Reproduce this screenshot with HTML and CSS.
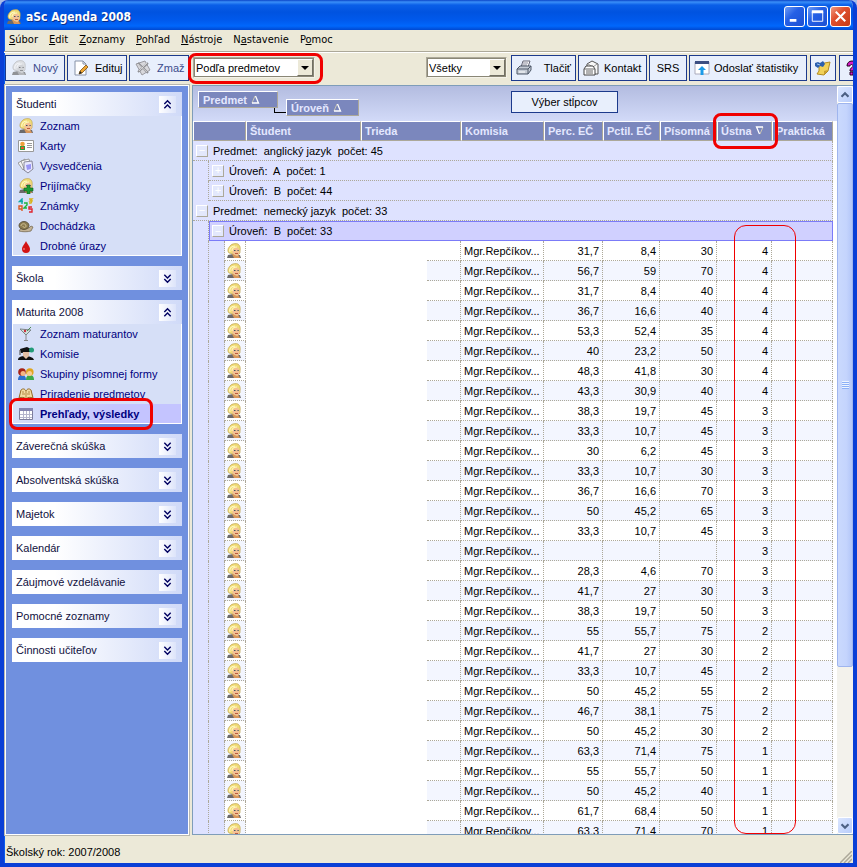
FILE: index.html
```html
<!DOCTYPE html>
<html lang="sk">

<head>
  <meta charset="UTF-8">
  <meta name="viewport" content="width=device-width, initial-scale=1.0">
  <title>aSc Agenda 2008</title>
  <link rel="stylesheet" href="styles.css">
</head>

<body>
  <svg class="sprite" aria-hidden="true">
    <symbol id="face" viewBox="0 0 16 16">
      <path d="M1 15l1-3 5-1 7 1 1 3z" fill="#6c6a6c"/>
      <path d="M6 11l6 0 2 4H8z" fill="#d9965c"/>
      <path d="M3 10C1 8 2 5 4 3c2-3 8-3 9-1 2 2 1 5 1 8l-3 3-4-2z" fill="#f0dc78" stroke="#b79b4c" stroke-width=".6"/>
      <path d="M6.500 7l4-3 2.500 2 .5 4-2 3-3-1-2-2z" fill="#f3c096"/>
      <path d="M4 9c-1-3 1-6 5-6M6 8c0-3 2-4 5-4" fill="none" stroke="#fff8c0" stroke-width="1.100"/>
      <path d="M8 7.500h1.500M11.500 7.500h1.200" stroke="#3c5560"/>
      <path d="M9 10.500h3" stroke="#b85c40"/>
    </symbol>
    <symbol id="up" viewBox="0 0 16 16">
      <path d="M5 7.500l3-3 3 3M5 11.500l3-3 3 3" fill="none" stroke="#000060" stroke-width="1.300"/>
    </symbol>
    <symbol id="down" viewBox="0 0 16 16">
      <path d="M5 4.500l3 3 3-3M5 8.500l3 3 3-3" fill="none" stroke="#000060" stroke-width="1.300"/>
    </symbol>
    <symbol id="sort" viewBox="0 0 9 9">
      <path d="M1 8L4 1" stroke="#c8c4b4" fill="none"/>
      <path d="M4.500 1l3 7H1" stroke="#fff" stroke-width="1.300" fill="none"/>
    </symbol>
  </svg>

  <div class="window">
    <header class="titlebar">
      <svg class="icon"><use href="#face"/></svg>
      <h1>aSc Agenda 2008</h1>
      <div class="window-buttons">
        <button type="button" aria-label="Minimalizovať"><svg viewBox="0 0 20 20"><path d="M5 14h7" stroke="#fff" stroke-width="3"/></svg></button>
        <button type="button" aria-label="Maximalizovať"><svg viewBox="0 0 20 20"><path d="M4.500 5v10h11V5z" stroke="#fff" fill="none"/><path d="M4 5h12" stroke="#fff" stroke-width="3"/></svg></button>
        <button type="button" class="close" aria-label="Zavrieť"><svg viewBox="0 0 20 20"><path d="M5 5l10 10M15 5L5 15" stroke="#fff" stroke-width="2.200"/></svg></button>
      </div>
    </header>

    <nav class="menu">
      <a href="#"><u>S</u>úbor</a>
      <a href="#"><u>E</u>dit</a>
      <a href="#"><u>Z</u>oznamy</a>
      <a href="#"><u>P</u>ohľad</a>
      <a href="#"><u>N</u>ástroje</a>
      <a href="#">N<u>a</u>stavenie</a>
      <a href="#">P<u>o</u>moc</a>
    </nav>

    <div class="toolbar">
      <button type="button" class="tool wide dim">
        <svg class="icon gray"><use href="#face"/></svg>Nový
      </button>
      <button type="button" class="tool wide">
        <svg class="icon" viewBox="0 0 16 16"><path d="M2 1h8l3 3v11H2z" fill="#fff" stroke="#8792a8"/><path d="M10 1v3h3" fill="none" stroke="#8792a8"/><path d="M6 14l1-3 6-6 2 2-6 6z" fill="#f0a632" stroke="#7c5314" stroke-width=".8"/><path d="M6 14l1-3 2 2z" fill="#222"/></svg>Edituj
      </button>
      <button type="button" class="tool wide dim">
        <svg class="icon" viewBox="0 0 16 16"><path d="M1 4l9-3 5 9-8 5z" fill="#d8d8dc" stroke="#9a9aa0"/><path d="M3 3l10 10M13 3L3 12" stroke="#909094" stroke-width="2"/><path d="M3 4l9 8M12 3L4 11" stroke="#eee" stroke-width=".7"/></svg>Zmaž
      </button>
      <div class="combo view">
        <select aria-label="Pohľad"><option>Podľa predmetov</option></select>
        <span class="arrow"></span>
        <span class="mark mark-view"></span>
      </div>
      <div class="combo filter">
        <select aria-label="Filter"><option>Všetky</option></select>
        <span class="arrow"></span>
      </div>
      <button type="button" class="tool print">
        <svg class="icon" viewBox="0 0 16 16"><path d="M5 7l2-6h7l-2 6z" fill="#fff" stroke="#667"/><path d="M7 3h5M6 5h5" stroke="#889"/><path d="M1 9l3-3h11v4l-3 4H1z" fill="#c5cbd5" stroke="#4e5868"/><path d="M1 9h11l3-3M12 9v5" fill="none" stroke="#4e5868"/><path d="M3 12h6" stroke="#fff"/></svg>Tlačiť
      </button>
      <button type="button" class="tool contact">
        <svg class="icon" viewBox="0 0 16 16"><path d="M4 7V4l5-3 6 3v10H9" fill="#f8f8f8" stroke="#555"/><path d="M5 4l5 3 4-3" fill="none" stroke="#999"/><path d="M1 9l2-3h7l2 3v6H1z" fill="#fff" stroke="#444"/><path d="M1 9h11M3 11h7M3 13h7" stroke="#666"/></svg>Kontakt
      </button>
      <button type="button" class="tool srs">SRS</button>
      <button type="button" class="tool stats">
        <svg class="icon" viewBox="0 0 16 16"><path d="M1 2h14v12H1z" fill="#fff" stroke="#aab"/><path d="M1 1h14v3H1z" fill="#3c4f82"/><path d="M8 6l4 4H9.500v5h-3v-5H4z" fill="#1c9be8"/></svg>Odoslať štatistiky
      </button>
      <button type="button" class="tool note" aria-label="Poznámka">
        <svg class="icon" viewBox="0 0 16 16"><path d="M4 4l11-2-2 9-4 4-7-1 2-3z" fill="#f1d158" stroke="#b08a23"/><path d="M9 15l0-4 4-1z" fill="#c79d2c"/><path d="M0 3l3-1 2 1 3-2 2 3-2 3-3-1-2 2-3-2z" fill="#2c5fae"/><path d="M2 4l3 1" stroke="#9cc2ee"/></svg>
      </button>
      <button type="button" class="tool help" aria-label="Pomoc">
        <svg class="icon" viewBox="0 0 16 16"><path d="M3 6c0-3 2-5 5-5s5 2 5 5-4 3-4 5H6c0-4 3-3 3-5 0-2-3-2-3 0zM6 12h3v3H6z" fill="#d81bc8" stroke="#230020"/></svg>
      </button>
    </div>

    <main class="content">
      <aside class="sidebar">
        <section class="panel">
          <h2>Študenti <svg class="toggle"><use href="#up"/></svg></h2>
          <ul>
            <li><a href="#"><svg class="icon"><use href="#face"/></svg>Zoznam</a></li>
            <li><a href="#"><svg class="icon" viewBox="0 0 16 16"><path d="M.5 2.500h15v11H.5z" fill="#fff" stroke="#999"/><path d="M2 12V8h5v4z" fill="#31a03c"/><circle cx="4.500" cy="6" r="2.300" fill="#f0a13c"/><path d="M3 9h3v2H3z" fill="#e8542c"/><path d="M9 5.500h5M9 7.500h5M9 9.500h5" stroke="#999"/></svg>Karty</a></li>
            <li><a href="#"><svg class="icon" viewBox="0 0 16 16"><path d="M0 5l7-4 3 7-5 4z" fill="#f4f4f4" stroke="#888" stroke-width=".8"/><path d="M3 3l8-2 2 8-6 4z" fill="#fafafa" stroke="#888" stroke-width=".8"/><path d="M6 4l8-1 1 8-5 4-4-3z" fill="#e8e8ff" stroke="#707080" stroke-width=".8"/><path d="M8 7l5-1 0 5-4 1z" fill="#9a96f4"/></svg>Vysvedčenia</a></li>
            <li><a href="#"><svg class="icon" viewBox="0 0 16 16"><use href="#face"/><path d="M9 7h3v3h3v3h-3v3H9v-3H6v-3h3z" fill="#1d9a34" stroke="#0b6119" stroke-width=".6"/></svg>Prijímačky</a></li>
            <li><a href="#"><svg class="icon" viewBox="0 0 16 16" fill="none" stroke-width="1.400"><path d="M4 6V1L1.500 3.500H5" stroke="#12a9a5"/><path d="M11 1h3l-2 2h2l-1 2h-2" stroke="#d8b31c"/><path d="M6 5h3v2L6 10h3" stroke="#1eb53a"/><path d="M4 11H1V8h3v5" stroke="#dd5a20"/><path d="M14 9h-3v2h3v3h-3" stroke="#e0242e"/></svg>Známky</a></li>
            <li><a href="#"><svg class="icon" viewBox="0 0 16 16"><path d="M1 13c3 1 9 1 12 0l2-4-2-1-2 2H3z" fill="#c3b396" stroke="#6f6248" stroke-width=".7"/><ellipse cx="6" cy="7.500" rx="5" ry="4" fill="#8c7c50" stroke="#4f4630" stroke-width=".8"/><path d="M3 8c0-3 5-3 5 0 0 2-3 2-3 0" fill="none" stroke="#d0c193"/></svg>Dochádzka</a></li>
            <li><a href="#"><svg class="icon" viewBox="0 0 16 16"><path d="M8 3c1 3 4 5 4 8a4 4 0 0 1-8 0c0-3 3-5 4-8z" fill="#d31414"/><path d="M6 10v2" stroke="#ff9a9a"/></svg>Drobné úrazy</a></li>
          </ul>
        </section>
        <section class="panel">
          <h2>Škola <svg class="toggle"><use href="#down"/></svg></h2>
        </section>
        <section class="panel">
          <h2>Maturita 2008 <svg class="toggle"><use href="#up"/></svg></h2>
          <ul>
            <li><a href="#"><svg class="icon" viewBox="0 0 16 16"><path d="M2 3l11 1-5 5z" fill="#cfe0da" stroke="#7d8688"/><path d="M8 9v5M6 14.500h4" stroke="#888"/><path d="M9 5l4-4" stroke="#4d8a52"/><circle cx="7" cy="5" r="1.200" fill="#c92f3f"/></svg>Zoznam maturantov</a></li>
            <li><a href="#"><svg class="icon" viewBox="0 0 16 16"><path d="M0 14c0-3 3-4 7-4s8 1 9 4z" fill="#111"/><path d="M2 3l7-2 4 2-1 3-9 1z" fill="#111"/><path d="M5 6h6v4l-3 3-3-3z" fill="#e4c0a4"/><path d="M2 4v5" stroke="#444"/><circle cx="13.500" cy="4" r="2.500" fill="#239b78"/></svg>Komisie</a></li>
            <li><a href="#"><svg class="icon" viewBox="0 0 16 16"><path d="M0 14c0-4 2-5 4-5s4 1 4 5z" fill="#2d70cf"/><path d="M8 14c0-4 2-5 4-5s4 1 4 5z" fill="#3ca94a"/><circle cx="4" cy="6" r="3.800" fill="#a72216"/><circle cx="5" cy="7.500" r="2.500" fill="#f3b584"/><circle cx="11.800" cy="6" r="3.800" fill="#e0a51f"/><circle cx="11.500" cy="7.500" r="2.500" fill="#f8cb91"/></svg>Skupiny písomnej formy</a></li>
            <li><a href="#"><svg class="icon" viewBox="0 0 16 16"><path d="M1 12l2-8c2-2 4-1 5 1 1-2 3-3 5-1l2 8c-3-1-5-1-7 1-2-2-4-2-7-1z" fill="#f2dda4" stroke="#936923"/><path d="M8 5v8M4 6l2 0M10 6h2M4 8h3M9 8h3" stroke="#b28b45"/></svg>Priradenie predmetov</a></li>
            <li class="current"><a href="#"><svg class="icon" viewBox="0 0 16 16"><path d="M1.500 2.500h13v11h-13z" fill="#fff" stroke="#7d7d9c"/><path d="M1 2h14v3H1z" fill="#8585b0"/><path d="M2 8.500h12M2 11.500h12M5.500 5v8M8.500 5v8M11.500 5v8" stroke="#b5b5cc"/></svg>Prehľady, výsledky</a><span class="mark mark-item"></span></li>
          </ul>
        </section>
        <section class="panel">
          <h2>Záverečná skúška <svg class="toggle"><use href="#down"/></svg></h2>
        </section>
        <section class="panel">
          <h2>Absolventská skúška <svg class="toggle"><use href="#down"/></svg></h2>
        </section>
        <section class="panel">
          <h2>Majetok <svg class="toggle"><use href="#down"/></svg></h2>
        </section>
        <section class="panel">
          <h2>Kalendár <svg class="toggle"><use href="#down"/></svg></h2>
        </section>
        <section class="panel">
          <h2>Záujmové vzdelávanie <svg class="toggle"><use href="#down"/></svg></h2>
        </section>
        <section class="panel">
          <h2>Pomocné zoznamy <svg class="toggle"><use href="#down"/></svg></h2>
        </section>
        <section class="panel">
          <h2>Činnosti učiteľov <svg class="toggle"><use href="#down"/></svg></h2>
        </section>
      </aside>

      <div class="grid">
        <div class="view-area">
          <div class="grouping">
            <button type="button" class="chip">Predmet <svg class="sort"><use href="#sort"/></svg></button>
            <span class="link"></span>
            <button type="button" class="chip second">Úroveň <svg class="sort"><use href="#sort"/></svg></button>
            <button type="button" class="tool columns">Výber stĺpcov</button>
          </div>
          <table>
            <colgroup>
              <col class="c-indent">
              <col class="c-indent">
              <col class="c-icon">
              <col class="c-student">
              <col class="c-class">
              <col class="c-gap">
              <col class="c-board">
              <col class="c-perc">
              <col class="c-pctil">
              <col class="c-written">
              <col class="c-oral">
              <col>
            </colgroup>
            <thead>
              <tr>
                <th colspan="3"></th>
                <th>Študent</th>
                <th colspan="2">Trieda</th>
                <th>Komisia</th>
                <th>Perc. EČ</th>
                <th>Pctil. EČ</th>
                <th>Písomná</th>
                <th class="oral">Ústna <svg class="sort flip"><use href="#sort"/></svg><span class="mark mark-oral"></span></th>
                <th>Praktická</th>
              </tr>
            </thead>
            <tbody id="rows">
              <tr class="group"><td colspan="12"><div class="label"><button type="button" class="box">−</button>Predmet:&nbsp; anglický jazyk&nbsp; počet: 45</div></td></tr>
              <tr class="group"><td class="indent"></td><td colspan="11"><div class="label"><button type="button" class="box">+</button>Úroveň:&nbsp; A&nbsp; počet: 1</div></td></tr>
              <tr class="group"><td class="indent"></td><td colspan="11"><div class="label"><button type="button" class="box">+</button>Úroveň:&nbsp; B&nbsp; počet: 44</div></td></tr>
              <tr class="group"><td colspan="12"><div class="label"><button type="button" class="box">−</button>Predmet:&nbsp; nemecký jazyk&nbsp; počet: 33</div></td></tr>
              <tr class="group selected"><td class="indent"></td><td colspan="11"><div class="label"><button type="button" class="box">−</button>Úroveň:&nbsp; B&nbsp; počet: 33</div></td></tr>
            </tbody>
          </table>
          <span class="mark-column"></span>
        </div>
        <div class="scrollbar">
          <button type="button" aria-label="Hore"><svg viewBox="0 0 16 16"><path d="M4 10l4-4 4 4" fill="none" stroke="#4d6185" stroke-width="2.500"/></svg></button>
          <div class="track"><div class="thumb"><span></span></div></div>
          <button type="button" aria-label="Dole"><svg viewBox="0 0 16 16"><path d="M4 6l4 4 4-4" fill="none" stroke="#4d6185" stroke-width="2.500"/></svg></button>
        </div>
      </div>
    </main>

    <footer class="status">
      <span>Školský rok: 2007/2008</span>
      <svg class="resize" viewBox="0 0 12 12"><path d="M0 12L12 0M4 12l8-8M8 12l4-4" stroke="#aca899" stroke-width="1.500"/></svg>
    </footer>
  </div>

  <script src="script.js"></script>
</body>

</html>
```
FILE: styles.css
```css
* {
  box-sizing: border-box;
}

body {
  margin: 0;
  background: #a9bce8;
  font: 11px/14px "Liberation Sans", Arial, sans-serif;
  color: #000;
}

button,
select {
  font: inherit;
  color: inherit;
  margin: 0;
}

a {
  color: inherit;
  text-decoration: none;
}

.sprite {
  position: absolute;
  width: 0;
  height: 0;
}

.icon {
  flex: none;
  width: 16px;
  height: 16px;
}

.gray {
  filter: grayscale(1);
  opacity: 0.7;
}

.window {
  display: flex;
  flex-direction: column;
  height: 100vh;
  overflow: hidden;
  border: solid #0a3fd6;
  border-width: 0 4px 4px;
  border-radius: 8px 8px 0 0;
  background: #ece9d8;
  box-shadow: inset 1px 0 #0a5cf0;
}

/* title bar */
.titlebar {
  flex: none;
  display: flex;
  align-items: center;
  gap: 4px;
  height: 30px;
  margin: 0 -4px;
  padding: 3px 6px 0;
  background: linear-gradient(#0b45c8 0, #3a8ff8 2px, #0a5fe8 5px, #0053e0 12px, #0059ec 20px, #0067fc 26px, #0048d0 30px);
  color: #fff;
}

.titlebar h1 {
  flex: 1;
  margin: 0;
  font: bold 12px/18px "DejaVu Sans Condensed", "DejaVu Sans", sans-serif;
  text-shadow: 1px 1px #0b2f8a;
}

.window-buttons {
  display: flex;
  gap: 2px;
}

.window-buttons button {
  width: 21px;
  height: 21px;
  padding: 0;
  border: 1px solid #fff;
  border-radius: 3px;
  background: linear-gradient(135deg, #6f9df5, #2560e6 40%, #1c50d2);
}

.window-buttons .close {
  background: linear-gradient(135deg, #f09a80, #e0502e 40%, #c43a16);
}

.window-buttons svg {
  display: block;
}

/* menu */
.menu {
  flex: none;
  display: flex;
  gap: 11px;
  height: 22px;
  padding: 2px 5px;
  border-bottom: 1px solid #aca899;
  box-shadow: 0 1px #fff;
  font: 11px/15px "DejaVu Sans Condensed", "DejaVu Sans", sans-serif;
}

/* toolbar */
.toolbar {
  position: relative;
  z-index: 2;
  flex: none;
  display: flex;
  align-items: center;
  gap: 2px;
  height: 33px;
  padding: 0 0 2px 1px;
  white-space: nowrap;
}

.tool {
  flex: none;
  display: flex;
  align-items: center;
  height: 26px;
  padding: 0 4px;
  border: 1px solid #1c3a8c;
  background: #e8effc;
}

.wide {
  gap: 6px;
  width: 60px;
  padding: 0 5px;
}

.dim {
  color: #3c4c8c;
}

.combo {
  position: relative;
  flex: none;
  height: 21px;
}

.combo select {
  display: block;
  width: 100%;
  height: 100%;
  padding: 0 2px;
  border: 1px solid;
  border-color: #aca899 #f4f2e8 #f4f2e8 #aca899;
  border-radius: 0;
  outline: 1px solid #8a8776;
  outline-offset: -2px;
  background: #fff;
  appearance: none;
}

.arrow {
  position: absolute;
  top: 2px;
  right: 2px;
  width: 16px;
  height: 17px;
  border: 1px solid;
  border-color: #fff #716f64 #716f64 #fff;
  background: #ece9d8;
  pointer-events: none;
}

.arrow::after {
  content: "";
  position: absolute;
  top: 6px;
  left: 3px;
  border: 4px solid transparent;
  border-top-color: #000;
  border-bottom: 0;
}

.view {
  width: 122px;
  margin: 0 auto 0 2px;
}

.filter {
  width: 81px;
  margin-right: 2px;
}

.print {
  justify-content: space-between;
  width: 65px;
}

.contact {
  gap: 5px;
  width: 69px;
}

.srs {
  justify-content: center;
  width: 38px;
}

.stats {
  gap: 4px;
  width: 118px;
}

.note {
  width: 26px;
  margin: 0 1px;
}

.help {
  width: 14px;
  overflow: hidden;
  border-right: 0;
}

/* red outlines */
.mark {
  position: absolute;
  z-index: 3;
  border: 3px solid #f00000;
  border-radius: 8px;
  pointer-events: none;
}

.mark-view {
  inset: -4px -8px -6px -5px;
}

.mark-item {
  inset: -6px 28px -7px -4px;
}

.mark-oral {
  inset: -9px -7px -9px -5px;
}

.mark-column {
  position: absolute;
  z-index: 3;
  top: 139px;
  bottom: 0;
  left: 541px;
  width: 62px;
  border: 1px solid #f00000;
  border-radius: 12px;
  pointer-events: none;
}

/* sidebar */
.content {
  flex: 1;
  display: flex;
  gap: 3px;
  min-height: 0;
  padding-left: 1px;
}

.sidebar {
  flex: none;
  display: flex;
  flex-direction: column;
  gap: 10px;
  width: 184px;
  padding: 6px;
  border: 1px solid #fff;
  outline: 1px solid #b8b8b0;
  background: #7090df;
}

.panel h2 {
  display: flex;
  align-items: center;
  justify-content: space-between;
  height: 24px;
  margin: 0;
  padding: 0 6px 0 4px;
  background: linear-gradient(90deg, #fff, #fff 25%, #d0daf8);
  color: #101040;
  font-size: 11px;
  font-weight: normal;
}

.toggle {
  width: 17px;
  height: 17px;
  background: linear-gradient(90deg, #fff, #dde4fa);
}

.panel ul {
  margin: 0;
  padding: 0;
  border: solid #fff;
  border-width: 0 1px 1px;
  background: #d6dff7;
  list-style: none;
}

.panel li {
  position: relative;
  height: 20px;
}

.panel li:last-child {
  height: 19px;
}

.panel li a {
  display: flex;
  align-items: center;
  gap: 6px;
  height: 20px;
  padding-left: 5px;
  color: #000080;
}

.panel .current {
  background: linear-gradient(90deg, #d6dff7, #c4c4ff 60%);
}

.current a {
  font-weight: bold;
}

/* grid */
.grid {
  flex: 1;
  display: flex;
  min-width: 0;
  border: solid #7f9db9;
  border-width: 1px 0 1px 1px;
  background: #fff;
}

.view-area {
  position: relative;
  flex: 1;
  min-width: 0;
  overflow: hidden;
  padding-right: 4px;
}

.grouping {
  display: flex;
  align-items: flex-start;
  height: 35px;
  margin-right: -4px;
  padding: 5px;
  background: linear-gradient(#b3bce0, #d2daf8);
}

.chip {
  display: flex;
  align-items: center;
  gap: 4px;
  width: 80px;
  height: 17px;
  padding: 0 4px;
  border: 1px solid;
  border-color: #fff #aca899 #aca899 #fff;
  background: #7b87bd;
  color: #e4e8ff;
  font-weight: bold;
}

.chip.second {
  width: 73px;
  margin-top: 8px;
}

.link {
  width: 12px;
  height: 5px;
  margin: 17px 0 0 -4px;
  border: solid #000;
  border-width: 0 0 1px 1px;
}

.sort {
  flex: none;
  width: 9px;
  height: 9px;
}

.flip {
  transform: rotate(180deg);
}

.columns {
  justify-content: center;
  width: 107px;
  height: 22px;
  margin-left: 152px;
}

table {
  width: 100%;
  border-collapse: separate;
  border-spacing: 0;
  table-layout: fixed;
}

.c-indent {
  width: 16px;
}

.c-icon {
  width: 21px;
}

.c-student {
  width: 115px;
}

.c-class {
  width: 66px;
}

.c-gap {
  width: 34px;
}

.c-board {
  width: 83px;
}

.c-perc {
  width: 59px;
}

.c-pctil,
.c-written {
  width: 57px;
}

.c-oral {
  width: 55px;
}

th {
  height: 20px;
  padding: 0 0 0 3px;
  border: 1px solid;
  border-color: #fff #aca899 #aca899 #fff;
  background: #7b87bd;
  color: #e4e8ff;
  text-align: left;
  white-space: nowrap;
}

.oral {
  position: relative;
}

td {
  height: 20px;
  padding: 0 3px;
  border: dotted #aca899;
  border-width: 0 1px 1px 0;
  white-space: nowrap;
}

.num {
  text-align: right;
}

.striped td {
  background: #f3f6ff;
}

.group td,
.striped .indent,
.indent {
  background: #dee2ff;
}

.indent {
  border-bottom: 0;
}

.group.selected td:last-child {
  padding: 0 2px;
  border: 1px solid #7b7bf8;
  background: #d0d0ff;
}

.label {
  display: flex;
  align-items: center;
  gap: 5px;
}

.box {
  width: 12px;
  height: 12px;
  padding: 0;
  border: 1px solid;
  border-color: #fff #aca899 #aca899 #fff;
  background: #e3e8fc;
  color: #fff;
  line-height: 9px;
}

.face {
  padding: 0 1px;
}

.face svg {
  display: block;
}

/* names are hidden */
.blank,
.striped .blank {
  border: 0;
  background: #fff;
}

/* scrollbar */
.scrollbar {
  flex: none;
  display: flex;
  flex-direction: column;
  width: 16px;
  background: #f3f2ec;
}

.scrollbar button {
  flex: none;
  height: 17px;
  padding: 0;
  border: 1px solid #fff;
  border-radius: 2px;
  background: linear-gradient(135deg, #dbe6ff, #b9cdfb);
}

.scrollbar svg {
  display: block;
}

.track {
  flex: 1;
}

.thumb {
  display: flex;
  align-items: center;
  justify-content: center;
  height: 79%;
  border: 1px solid #9fb5ee;
  border-radius: 2px;
  background: linear-gradient(90deg, #cad9fd, #c4d4fd 60%, #b3c6f8);
}

.thumb span {
  width: 7px;
  height: 8px;
  background: repeating-linear-gradient(#eef4fe 0, #eef4fe 1px, #8cb0f8 1px, #8cb0f8 2px);
}

/* status bar */
.status {
  flex: none;
  display: flex;
  align-items: center;
  justify-content: space-between;
  height: 28px;
  padding: 6px 1px 0 2px;
}

.resize {
  align-self: flex-end;
  width: 12px;
  height: 12px;
}
```
FILE: script.js
```js
// perc. EČ, pctil. EČ, písomná, ústna
const results = [
  ['31,7', '8,4', '30', 4],
  ['56,7', '59', '70', 4],
  ['31,7', '8,4', '40', 4],
  ['36,7', '16,6', '40', 4],
  ['53,3', '52,4', '35', 4],
  ['40', '23,2', '50', 4],
  ['48,3', '41,8', '30', 4],
  ['43,3', '30,9', '40', 4],
  ['38,3', '19,7', '45', 3],
  ['33,3', '10,7', '45', 3],
  ['30', '6,2', '45', 3],
  ['33,3', '10,7', '30', 3],
  ['36,7', '16,6', '70', 3],
  ['50', '45,2', '65', 3],
  ['33,3', '10,7', '45', 3],
  ['', '', '', 3],
  ['28,3', '4,6', '70', 3],
  ['41,7', '27', '30', 3],
  ['38,3', '19,7', '50', 3],
  ['55', '55,7', '75', 2],
  ['41,7', '27', '30', 2],
  ['33,3', '10,7', '45', 2],
  ['50', '45,2', '55', 2],
  ['46,7', '38,1', '75', 2],
  ['50', '45,2', '30', 2],
  ['63,3', '71,4', '75', 1],
  ['55', '55,7', '50', 1],
  ['50', '45,2', '40', 1],
  ['61,7', '68,4', '50', 1],
  ['63,3', '71,4', '70', 1],
];

const rows = results.map((row, i) => `
  <tr class="${i % 2 ? 'striped' : ''}">
    <td class="indent"></td>
    <td class="indent"></td>
    <td class="face"><svg class="icon"><use href="#face"/></svg></td>
    <td class="blank" colspan="2"></td>
    <td></td>
    <td>Mgr.Repčíkov...</td>
    ${row.map(value => `<td class="num">${value}</td>`).join('')}
    <td></td>
  </tr>`);

document.getElementById('rows').insertAdjacentHTML('beforeend', rows.join(''));
```
